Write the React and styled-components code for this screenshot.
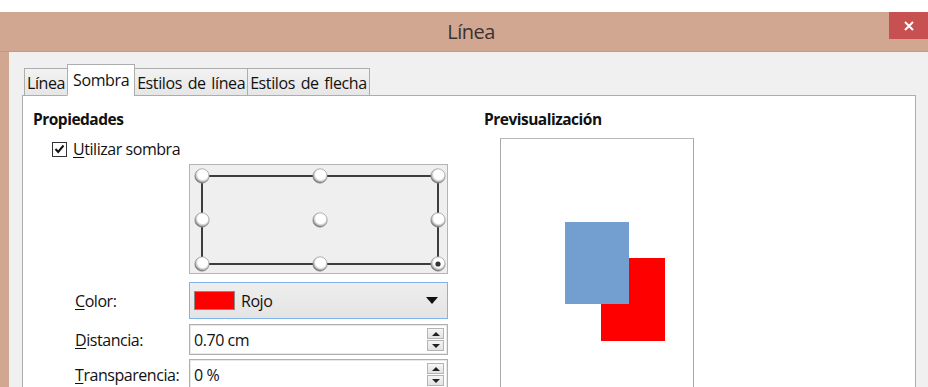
import React from "react";
import styled, { createGlobalStyle } from "styled-components";

const Global = createGlobalStyle`
  html, body { margin: 0; padding: 0; background: #ffffff; }
  body { font-family: "Open Sans", "Noto Sans", sans-serif; font-size: 16px; color: #000; }
`;

const Page = styled.div`
  width: 928px;
  height: 387px;
  padding-top: 12px;
  box-sizing: border-box;
  overflow: hidden;
`;

const Window = styled.div`
  display: flex;
  flex-direction: column;
  background: #d2a792;
  height: 375px;
`;

const TitleBar = styled.div`
  position: relative;
  flex-shrink: 0;
  height: 40px;
  display: flex;
  align-items: center;
  justify-content: center;
  border-bottom: 1px solid #bf9a87;
  box-sizing: border-box;
`;

const Title = styled.div`
  font-family: "Open Sans", sans-serif;
  font-size: 20px;
  color: #3a3330;
  margin-left: 14px;
  letter-spacing: -0.5px;
`;

const CloseButton = styled.div`
  position: absolute;
  top: 0;
  right: 0;
  width: 39px;
  height: 27px;
  background: #c75050;
  display: flex;
  align-items: center;
  justify-content: center;
`;

const Body = styled.div`
  flex: 1;
  min-height: 0;
  margin-left: 9px;
  background: #f0f0f0;
  padding: 12px 12px 0 13px;
  display: flex;
  flex-direction: column;
`;

const TabStrip = styled.div`
  flex-shrink: 0;
  display: flex;
  align-items: flex-end;
  padding-left: 2px;
  height: 32px;
  position: relative;
  z-index: 1;
  margin-bottom: -1px;
`;

const Tab = styled.div`
  height: ${(p) => (p.$active ? 32 : 28)}px;
  box-sizing: border-box;
  padding: 0 ${(p) => (p.$active ? 5 : 2)}px;
  border: 1px solid #adadad;
  border-bottom: ${(p) => (p.$active ? "1px solid #ffffff" : "1px solid #adadad")};
  background: ${(p) => (p.$active ? "#ffffff" : "linear-gradient(#f2f2f2, #e6e6e6)")};
  margin-left: ${(p) => (p.$first ? 0 : -1)}px;
  font-size: 16px;
  letter-spacing: -0.4px;
  word-spacing: 2px;
  display: flex;
  align-items: center;
  padding-top: ${(p) => (p.$active ? 0 : 2)}px;
  color: #111;
`;

const Panel = styled.div`
  flex: 1;
  min-height: 0;
  background: #ffffff;
  border: 1px solid #adadad;
  border-bottom: none;
  display: grid;
  grid-template-columns: 450px 1fr;
  align-items: start;
  padding: 14px 0 0 10px;
`;

const Column = styled.div`
  display: flex;
  flex-direction: column;
`;

const Heading = styled.div`
  font-weight: 700;
  font-size: 15.5px;
  letter-spacing: -0.5px;
  line-height: 18px;
  color: #111;
`;

const CheckRow = styled.label`
  display: flex;
  align-items: center;
  gap: 6px;
  margin: 11px 0 0 19px;
  line-height: 20px;
  font-size: 16px;
  letter-spacing: -0.45px;
  color: #111;
`;

const CheckBox = styled.span`
  width: 13px;
  height: 13px;
  border: 1px solid #333;
  background: #fff;
  display: flex;
  align-items: center;
  justify-content: center;
`;

const U = styled.span`
  text-decoration: underline;
  text-underline-offset: 2px;
`;

const Form = styled.div`
  display: grid;
  grid-template-columns: 114px 259px;
  margin: 5px 0 0 42px;
  align-items: center;
`;

const Label = styled.div`
  font-size: 16px;
  letter-spacing: -0.45px;
  color: #111;
  margin-top: ${(p) => p.$mt}px;
`;

const PositionBox = styled.div`
  grid-column: 2;
  height: 110px;
  box-sizing: border-box;
  border: 1px solid #b4b4b4;
  background: #efefef;
`;

const Dropdown = styled.div`
  height: 37px;
  box-sizing: border-box;
  margin-top: 8px;
  border: 1px solid #7eb4ea;
  background: linear-gradient(#eeeeee, #e4e4e4);
  display: flex;
  align-items: center;
  padding: 0 9px 0 4px;
  gap: 6px;
`;

const Swatch = styled.span`
  width: 41px;
  height: 19px;
  box-sizing: border-box;
  background: #ff0000;
  border: 1px solid #8a8a8a;
`;

const ValueText = styled.span`
  flex: 1;
  font-size: 16px;
  letter-spacing: -0.45px;
  color: #111;
`;

const SpinField = styled.div`
  height: ${(p) => p.$h}px;
  margin-top: ${(p) => p.$mt}px;
  box-sizing: border-box;
  border: 1px solid #b0b0b0;
  box-shadow: inset 0 0 0 1px #e8e8e8;
  background: #fff;
  display: flex;
  align-items: center;
  padding: 0 3px 0 4px;
`;

const SpinButtons = styled.div`
  display: flex;
  flex-direction: column;
  gap: 1px;
`;

const SpinBtn = styled.div`
  width: 17px;
  height: 11px;
  box-sizing: border-box;
  border: 1px solid #b4b4b4;
  background: linear-gradient(#f6f6f6, #e2e2e2);
  display: flex;
  align-items: center;
  justify-content: center;
`;

const PreviewColumn = styled.div`
  display: flex;
  flex-direction: column;
  padding-left: 1px;
`;

const PreviewBox = styled.div`
  margin: 10px 0 0 16px;
  width: 194px;
  height: 260px;
  box-sizing: border-box;
  border: 1px solid #a8a8a8;
  border-top-color: #b8b8b8;
  background: #fff;
  position: relative;
`;

const Shape = styled.div`
  position: absolute;
  left: ${(p) => p.$x}px;
  top: ${(p) => p.$y}px;
  width: ${(p) => p.$w}px;
  height: ${(p) => p.$h}px;
  background: ${(p) => p.$c};
`;

const Tri = ({ up }) => (
  <svg width="8" height="4" viewBox="0 0 8 4">
    <polygon points={up ? "0,4 8,4 4,0" : "0,0 8,0 4,4"} fill="#222" />
  </svg>
);

const PositionDiagram = () => {
  const xs = [12, 130, 248];
  const ys = [11, 55, 99];
  return (
    <svg width="257" height="108" viewBox="0 0 257 108">
      <defs>
        <radialGradient id="knob" cx="55%" cy="40%" r="60%">
          <stop offset="0%" stopColor="#ffffff" />
          <stop offset="58%" stopColor="#ffffff" />
          <stop offset="82%" stopColor="#b5b5b5" />
          <stop offset="100%" stopColor="#555555" />
        </radialGradient>
      </defs>
      <rect x="12" y="11" width="236" height="88" fill="none" stroke="#111" strokeWidth="1.6" />
      {ys.map((y) =>
        xs.map((x) => (
          <g key={`${x}-${y}`}>
            <circle cx={x} cy={y} r="7.2" fill="url(#knob)" stroke="#8a8a8a" strokeWidth="0.6" />
            {x === 248 && y === 99 && <circle cx={x} cy={y} r="2.6" fill="#333" />}
          </g>
        ))
      )}
    </svg>
  );
};

export default function App() {
  return (
    <Page>
      <Global />
      <Window>
        <TitleBar>
          <Title>Línea</Title>
          <CloseButton>
            <svg width="10" height="10" viewBox="0 0 10 10">
              <path d="M1 1 L9 9 M9 1 L1 9" stroke="#fff" strokeWidth="2" />
            </svg>
          </CloseButton>
        </TitleBar>
        <Body>
          <TabStrip>
            <Tab $first>Línea</Tab>
            <Tab $active>Sombra</Tab>
            <Tab>Estilos de línea</Tab>
            <Tab>Estilos de flecha</Tab>
          </TabStrip>
          <Panel>
            <Column>
              <Heading>Propiedades</Heading>
              <CheckRow>
                <CheckBox>
                  <svg width="11" height="10" viewBox="0 0 11 10">
                    <path d="M1.5 5 L4.2 8 L9.5 1.5" fill="none" stroke="#111" strokeWidth="2" />
                  </svg>
                </CheckBox>
                <span>
                  <U>U</U>tilizar sombra
                </span>
              </CheckRow>
              <Form>
                <PositionBox>
                  <PositionDiagram />
                </PositionBox>
                <Label $mt={8}>
                  <U>C</U>olor:
                </Label>
                <Dropdown>
                  <Swatch />
                  <ValueText>Rojo</ValueText>
                  <svg width="12" height="7" viewBox="0 0 12 7">
                    <polygon points="0,0 12,0 6,7" fill="#111" />
                  </svg>
                </Dropdown>
                <Label $mt={5}>
                  <U>D</U>istancia:
                </Label>
                <SpinField $h={31} $mt={5}>
                  <ValueText>0.70 cm</ValueText>
                  <SpinButtons>
                    <SpinBtn><Tri up /></SpinBtn>
                    <SpinBtn><Tri /></SpinBtn>
                  </SpinButtons>
                </SpinField>
                <Label $mt={4}>
                  <U>T</U>ransparencia:
                </Label>
                <SpinField $h={31} $mt={4}>
                  <ValueText>0 %</ValueText>
                  <SpinButtons>
                    <SpinBtn><Tri up /></SpinBtn>
                    <SpinBtn><Tri /></SpinBtn>
                  </SpinButtons>
                </SpinField>
              </Form>
            </Column>
            <PreviewColumn>
              <Heading>Previsualización</Heading>
              <PreviewBox>
                <Shape $x={100} $y={119} $w={64} $h={83} $c="#ff0000" />
                <Shape $x={64} $y={83} $w={64} $h={82} $c="#729fcf" />
              </PreviewBox>
            </PreviewColumn>
          </Panel>
        </Body>
      </Window>
    </Page>
  );
}
